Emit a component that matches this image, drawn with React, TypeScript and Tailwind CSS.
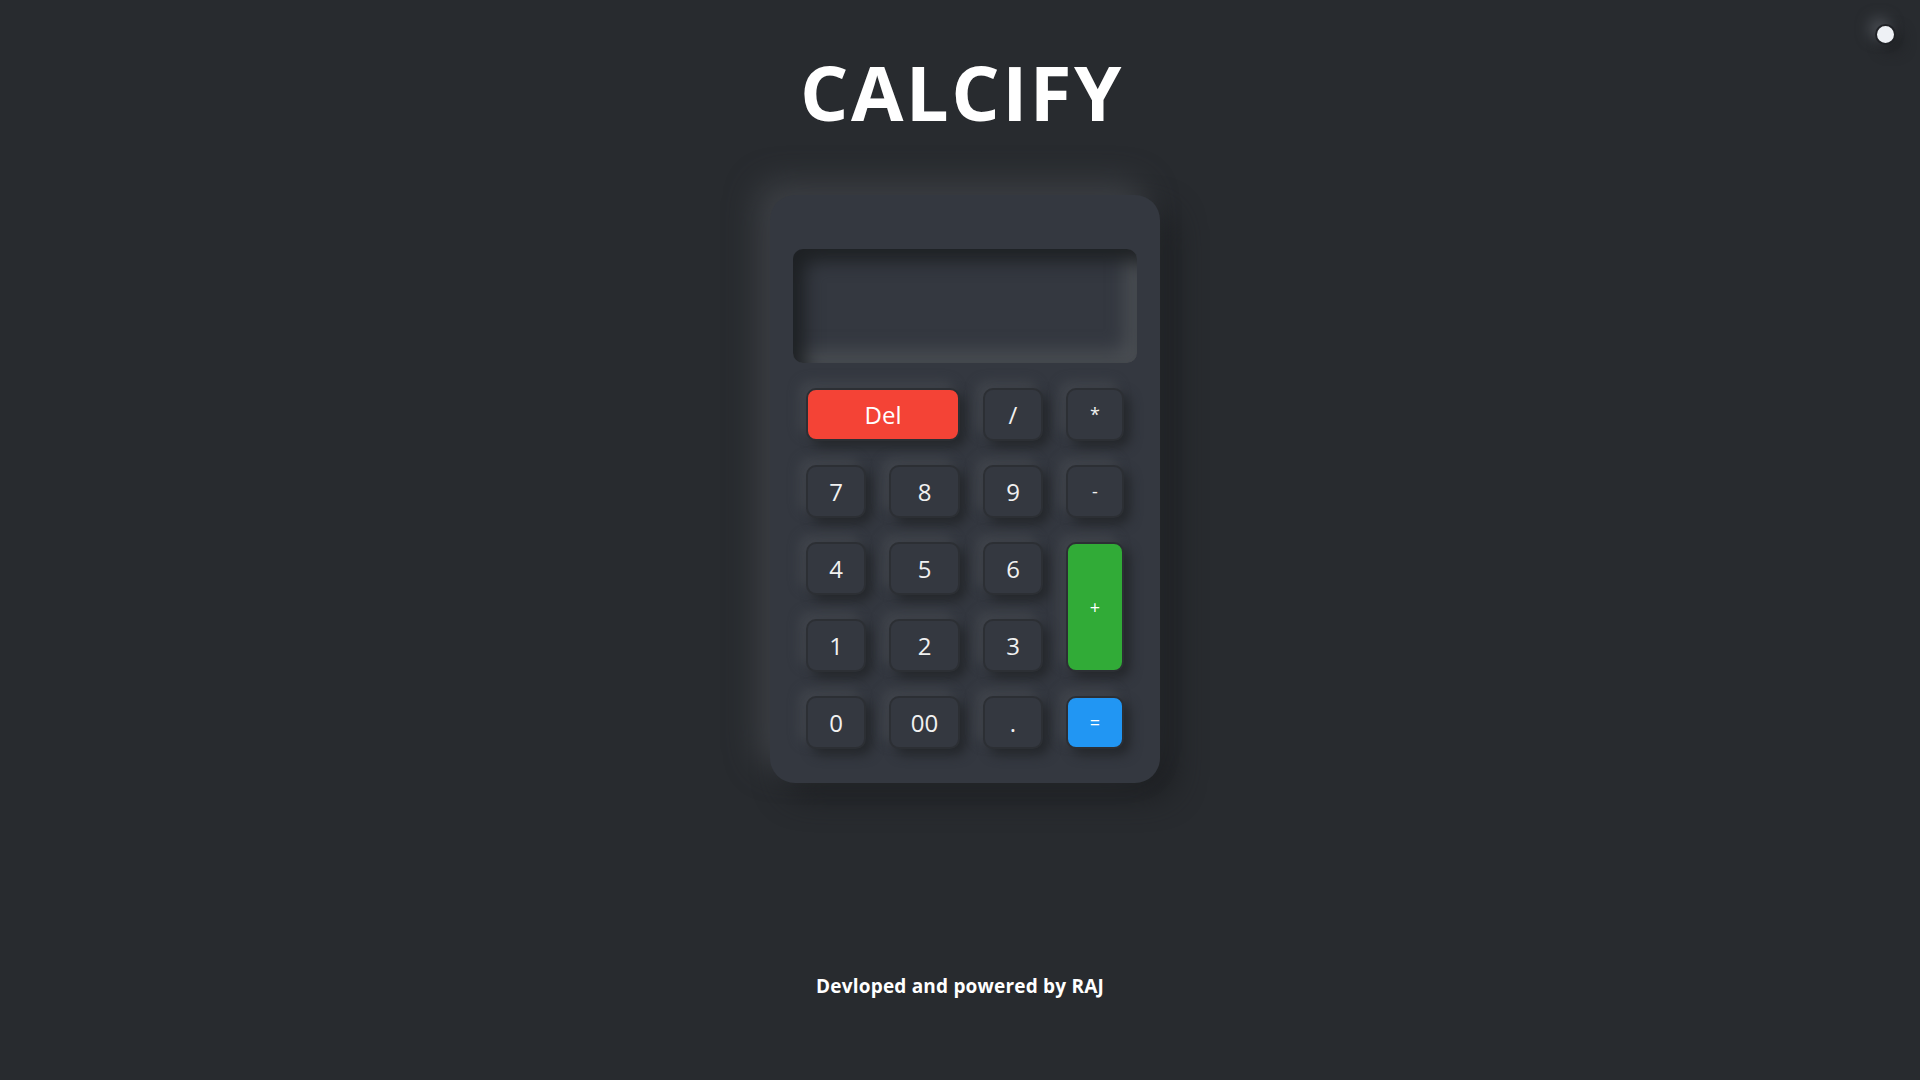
import React from "react";

const font = { fontFamily: '"Open Sans", "Noto Sans", sans-serif' };

const key =
  "flex items-center justify-center rounded-[10px] border-2 border-[#2c2f34] shadow-[6px_6px_12px_#24272b,-6px_-6px_12px_#42464d]";

function Key({ label, className = "bg-[#343840] text-[24px] text-[#f1f1f1]" }: { label: string; className?: string }) {
  return <button className={`${key} ${className}`}>{label}</button>;
}

export default function App() {
  return (
    <div
      className="relative flex min-h-screen flex-col items-center bg-[#282b2f]"
      style={font}
    >
      <button className="absolute right-[24px] top-[24px] h-[21px] w-[21px] rounded-full border-2 border-[#202226] bg-[#eef1f5] shadow-[-6px_-6px_14px_#4a4e54,6px_6px_14px_#1f2124]" />

      <h1 className="ml-[4px] mt-[54px] text-[76px] font-bold leading-none tracking-[2.5px] text-white">
        CALCIFY
      </h1>

      <div className="ml-[10px] mt-[65px] flex h-[588px] w-[390px] flex-col items-center rounded-[25px] bg-[#343840] px-[23px] pt-[54px] shadow-[-14px_-14px_30px_#3b3e43,14px_14px_30px_#1d1f22]">
        <div className="h-[114px] w-[344px] rounded-[10px] bg-[#343840] shadow-[inset_12px_12px_18px_#1e2124,inset_-12px_-12px_18px_#4a4e53]" />

        <div className="mt-[25px] grid grid-cols-[60px_71px_60px_58px] grid-rows-[53px_53px_53px_53px_53px] gap-x-[23px] gap-y-[24px]">
          <Key
            label="Del"
            className="col-span-2 bg-[#f44336] text-[24px] text-white"
          />
          <Key label="/" />
          <Key label="*" className="bg-[#343840] text-[18px] text-[#f1f1f1]" />

          <Key label="7" />
          <Key label="8" />
          <Key label="9" />
          <Key label="-" className="bg-[#343840] text-[18px] text-[#f1f1f1]" />

          <Key label="4" />
          <Key label="5" />
          <Key label="6" />
          <Key
            label="+"
            className="row-span-2 bg-[#31ab37] text-[18px] text-white"
          />

          <Key label="1" />
          <Key label="2" />
          <Key label="3" />

          <Key label="0" />
          <Key label="00" />
          <Key label="." />
          <Key label="=" className="bg-[#2196f3] text-[18px] text-white" />
        </div>
      </div>

      <p className="mt-[189px] text-[19px] font-bold leading-[28px] tracking-[0.2px] text-white">
        Devloped and powered by RAJ
      </p>
    </div>
  );
}
